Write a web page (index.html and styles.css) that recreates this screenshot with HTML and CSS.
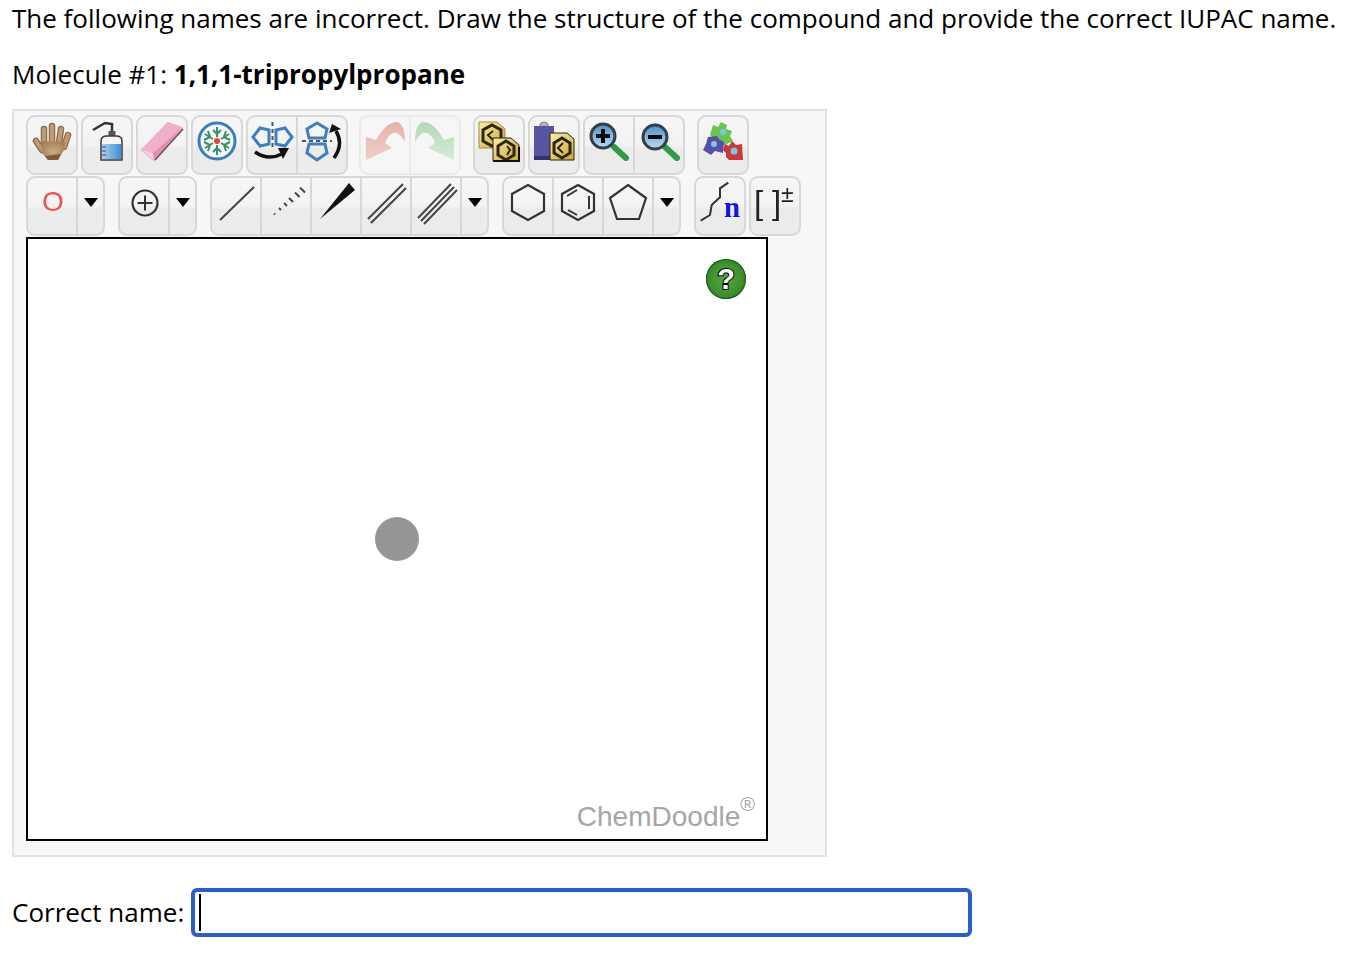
FILE: index.html
```html
<!DOCTYPE html>
<html>
<head>
    <meta name="viewport" content="width=device-width, initial-scale=1.0">
    <title>Molecule naming</title>
    <link rel="stylesheet" href="styles.css">
</head>
<body>
    <p class="intro">The following names are incorrect. Draw the structure of the compound and provide the correct IUPAC name.</p>
    <p class="molecule">Molecule #1: <b>1,1,1-tripropylpropane</b></p>

    <svg class="defs" width="0" height="0">
        <defs>
            <linearGradient id="gold" x1="0" y1="0" x2="1" y2="1">
                <stop offset="0" stop-color="#f8eeaa"/>
                <stop offset="1" stop-color="#c9a63a"/>
            </linearGradient>
            <linearGradient id="water" x1="0" y1="0" x2="1" y2="0">
                <stop offset="0" stop-color="#a9d3ef"/>
                <stop offset="1" stop-color="#3f8fd2"/>
            </linearGradient>
            <linearGradient id="lens" x1="0" y1="0" x2="0" y2="1">
                <stop offset="0" stop-color="#4f8fc4"/>
                <stop offset="1" stop-color="#bcdcf2"/>
            </linearGradient>
            <linearGradient id="pale-red" x1="0" y1="0" x2="0" y2="1">
                <stop offset="0" stop-color="#e4b3aa"/>
                <stop offset="1" stop-color="#efcfc8"/>
            </linearGradient>
            <linearGradient id="pale-green" x1="0" y1="0" x2="0" y2="1">
                <stop offset="0" stop-color="#b5d8b8"/>
                <stop offset="1" stop-color="#d6ead6"/>
            </linearGradient>
            <radialGradient id="skin" cx="0.5" cy="0.55" r="0.6">
                <stop offset="0" stop-color="#cfa884"/>
                <stop offset="1" stop-color="#a37c58"/>
            </radialGradient>
        </defs>
    </svg>

    <div class="sketcher">
        <div class="toolbar">
            <div class="group">
                <div class="btn"><svg class="icon" viewBox="0 0 48 56">
                    <g stroke="#8a6a4a" stroke-width="6.500" stroke-linecap="round" fill="none">
                        <path d="M8 24 L14 33"/><path d="M16 26 L16 12"/><path d="M24 26 L24 9"/><path d="M31 26 L33 12"/><path d="M36 30 L40 18"/>
                    </g>
                    <g stroke="#c09a76" stroke-width="4" stroke-linecap="round" fill="none">
                        <path d="M8 24 L14 33"/><path d="M16 26 L16 12"/><path d="M24 26 L24 9"/><path d="M31 26 L33 12"/><path d="M36 30 L40 18"/>
                    </g>
                    <path d="M13 24 L37 25 L36 33 L30 43 L20 43 L14 36 Z" fill="url(#skin)"/>
                    <path d="M20 43 L30 43 L33 37 L17 39 Z" fill="#7c5a3a"/>
                </svg></div>
            </div>
            <div class="group">
                <div class="btn"><svg class="icon" viewBox="0 0 48 56">
                    <path d="M10 13 L22 6 L29 7 L29 18" fill="none" stroke="#333" stroke-width="2.500"/>
                    <rect x="25.500" y="14" width="7" height="6" fill="#555"/>
                    <path d="M18 24 Q18 19 24 19 L33 19 Q39 19 39 24 L39 43 L18 43 Z" fill="#f4f4f0" stroke="#3a3a3a" stroke-width="1.500"/>
                    <path d="M19 27 L38 27 L38 42 L19 42 Z" fill="url(#water)"/>
                    <path d="M19 30 H23 M19 34 H23 M19 38 H23" stroke="#446" stroke-width="1"/>
                </svg></div>
            </div>
            <div class="group">
                <div class="btn"><svg class="icon" viewBox="0 0 48 56">
                    <path d="M4 33 L30 6 L44 11 L16 43 Z" fill="#f0b0cb" stroke="#f0b0cb" stroke-width="2" stroke-linejoin="round"/>
                    <path d="M4 33 L15 36 L16 43 Z" fill="#f8cfe0"/>
                    <path d="M15 36 L44 11 L16 43 Z" fill="#dd8fb0"/>
                    <path d="M17 43 L45 12" stroke="#6f4a58" stroke-width="1.500"/>
                </svg></div>
            </div>
            <div class="group">
                <div class="btn"><svg class="icon" viewBox="0 0 48 56">
                    <circle cx="24" cy="24" r="18" fill="#f4f8fa" stroke="#3a80b8" stroke-width="3"/>
                    <g stroke="#3f8f66" stroke-width="2" fill="none">
                        <path d="M24 10 V20 M20 13 L24 17 L28 13"/>
                        <path d="M24 38 V28 M20 35 L24 31 L28 35"/>
                        <path d="M12 17 L20 22 M11 23 L17 20 L15 14"/>
                        <path d="M36 17 L28 22 M37 23 L31 20 L33 14"/>
                        <path d="M12 31 L20 26 M11 25 L17 28 L15 34"/>
                        <path d="M36 31 L28 26 M37 25 L31 28 L33 34"/>
                    </g>
                    <circle cx="24" cy="24" r="3" fill="#e0443c"/>
                </svg></div>
            </div>
            <div class="group">
                <div class="btn"><svg class="icon" viewBox="0 0 48 56">
                    <path d="M24.500 5 V33" stroke="#555" stroke-width="2" stroke-dasharray="4 3"/>
                    <path d="M21 13 L12 11 L5 20 L12 29 L21 27 Z" fill="none" stroke="#3f7fc0" stroke-width="3"/>
                    <path d="M28 13 L37 11 L44 20 L37 29 L28 27 Z" fill="none" stroke="#3f7fc0" stroke-width="3"/>
                    <path d="M7 35 Q20 44 34 37" fill="none" stroke="#111" stroke-width="3.500"/>
                    <path d="M30 31 L41 31 L35 42 Z" fill="#111"/>
                </svg></div>
                <div class="btn"><svg class="icon" viewBox="0 0 48 56">
                    <path d="M4 24 H34" stroke="#555" stroke-width="2" stroke-dasharray="4 3"/>
                    <path d="M11 21 L9 12 L19 6 L29 12 L27 21 Z" fill="none" stroke="#3f7fc0" stroke-width="3"/>
                    <path d="M11 27 L9 36 L19 43 L29 36 L27 27 Z" fill="none" stroke="#3f7fc0" stroke-width="3"/>
                    <path d="M36 41 Q46 27 38 14" fill="none" stroke="#111" stroke-width="3.500"/>
                    <path d="M31 16 L34 7 L43 12 Z" fill="#111"/>
                </svg></div>
            </div>
            <div class="group off undo">
                <div class="btn"><svg class="icon" viewBox="0 0 48 56">
                    <path d="M5 43 L5 20 L15 23 Q25 5 36 5 Q44 7 44 25 Q38 14 32 16 Q27 18 24 26 L31 31 Z" fill="url(#pale-red)"/>
                </svg></div>
                <div class="btn"><svg class="icon" viewBox="0 0 48 56">
                    <path transform="translate(48,0) scale(-1,1)" d="M5 43 L5 20 L15 23 Q25 5 36 5 Q44 7 44 25 Q38 14 32 16 Q27 18 24 26 L31 31 Z" fill="url(#pale-green)"/>
                </svg></div>
            </div>
            <div class="group wide">
                <div class="btn"><svg class="icon" viewBox="0 0 48 56">
                    <path d="M4 5 H22 L30 12 V31 H4 Z" fill="url(#gold)" stroke="#a88c3a" stroke-width="1"/>
                    <path d="M17 8 L26 13 V24 L17 29 L8 24 V13 Z" fill="none" stroke="#2e2810" stroke-width="3"/>
                    <path d="M18 14 L13 18 L18 23" fill="none" stroke="#2e2810" stroke-width="2"/>
                    <path d="M18 21 H36 L44 28 V44 H18 Z" fill="url(#gold)" stroke="#2c2408" stroke-width="1"/>
                    <path d="M31 24 L39 29 V38 L31 43 L23 38 V29 Z" fill="none" stroke="#2e2810" stroke-width="3"/>
                    <path d="M32 29 L35 33 L32 38" fill="none" stroke="#2e2810" stroke-width="2"/>
                    <path d="M18 44 H44 V30" fill="none" stroke="#111" stroke-width="2"/>
                </svg></div>
            </div>
            <div class="group">
                <div class="btn"><svg class="icon" viewBox="0 0 48 56">
                    <rect x="4" y="9" width="20" height="34" fill="#58549f"/>
                    <rect x="4" y="39" width="20" height="4" fill="#33306b"/>
                    <path d="M10 9 V7 Q14 3 18 7 V9" fill="#b0b0b4" stroke="#85858a"/>
                    <path d="M20 16 H37 L44 22 V43 H20 Z" fill="url(#gold)" stroke="#2c2408" stroke-width="1"/>
                    <path d="M32 21 L40 26 V36 L32 41 L24 36 V26 Z" fill="none" stroke="#2e2810" stroke-width="3"/>
                    <path d="M33 26 L28 31 L33 36" fill="none" stroke="#2e2810" stroke-width="2"/>
                </svg></div>
            </div>
            <div class="group">
                <div class="btn"><svg class="icon" viewBox="0 0 48 56">
                    <path d="M29 30 L41 41" stroke="#2f9a48" stroke-width="6" stroke-linecap="round"/>
                    <circle cx="18" cy="19" r="12" fill="url(#lens)" stroke="#33404c" stroke-width="3"/>
                    <path d="M11 19 H25 M18 12 V26" stroke="#0a0a0a" stroke-width="4"/>
                </svg></div>
                <div class="btn"><svg class="icon" viewBox="0 0 48 56">
                    <path d="M30 30 L42 41" stroke="#2f9a48" stroke-width="6" stroke-linecap="round"/>
                    <circle cx="20" cy="20" r="12" fill="url(#lens)" stroke="#33404c" stroke-width="3"/>
                    <path d="M13 20 H27" stroke="#0a0a0a" stroke-width="4"/>
                </svg></div>
            </div>
            <div class="group wide">
                <div class="btn"><svg class="icon" viewBox="0 0 48 56">
                    <path d="M14 8 L19 10 L22 5 L28 8 L27 12 L33 14 L31 19 L34 24 L24 29 L19 26 L11 18 Z" fill="#6cc44e"/>
                    <path d="M9 20 L18 19 L20 22 L25 25 L24 36 L16 34 L12 38 L4 33 L7 27 Z" fill="#5650a6"/>
                    <path d="M26 27 L30 29 L33 24 L37 28 L43 27 L44 43 L30 43 L27 40 L27 36 L24 33 Z" fill="#c63a3a"/>
                    <circle cx="24" cy="15" r="3" fill="#7cc6e8"/>
                    <circle cx="15" cy="27" r="3" fill="#7cc6e8"/>
                    <circle cx="35" cy="34" r="3.500" fill="#7cc6e8"/>
                </svg></div>
            </div>
        </div>

        <div class="toolbar">
            <div class="group">
                <div class="btn"><svg class="icon" viewBox="0 0 48 56">
                    <text x="25" y="33" class="atom">O</text>
                </svg></div>
                <div class="arrow"></div>
            </div>
            <div class="group tool-set">
                <div class="btn"><svg class="icon" viewBox="0 0 48 56">
                    <circle cx="25" cy="25" r="12.500" fill="none" stroke="#333" stroke-width="2.200"/>
                    <path d="M17.500 25 H32.500 M25 17.500 V32.500" stroke="#333" stroke-width="2"/>
                </svg></div>
                <div class="arrow"></div>
            </div>
            <div class="group tool-set">
                <div class="btn"><svg class="icon" viewBox="0 0 48 56">
                    <path d="M8 42 L42 9" stroke="#444" stroke-width="2"/>
                </svg></div>
                <div class="btn"><svg class="icon" viewBox="0 0 48 56">
                    <path d="M12 35.500 L13 36.500 M17 30 L19 32 M22 25 L25 28 M27 20 L31 24 M33 14.500 L37.500 19 M38 9.500 L43 14.500" stroke="#444" stroke-width="2"/>
                </svg></div>
                <div class="btn"><svg class="icon" viewBox="0 0 48 56">
                    <path d="M8 41 L37 5 L43 12 Z" fill="#111"/>
                </svg></div>
                <div class="btn"><svg class="icon" viewBox="0 0 48 56">
                    <path d="M6 41 L41 6 M9 45 L44 10" stroke="#444" stroke-width="2"/>
                </svg></div>
                <div class="btn"><svg class="icon" viewBox="0 0 48 56">
                    <path d="M6 40 L39 6 M9 43 L42 9 M12 46 L45 12" stroke="#444" stroke-width="2"/>
                </svg></div>
                <div class="arrow"></div>
            </div>
            <div class="group tool-set">
                <div class="btn"><svg class="icon" viewBox="0 0 48 56">
                    <path d="M24 7 L40 16 L40 33 L24 42 L8 33 L8 16 Z" fill="none" stroke="#333" stroke-width="2.200"/>
                </svg></div>
                <div class="btn"><svg class="icon" viewBox="0 0 48 56">
                    <path d="M24 7 L40 16 L40 33 L24 42 L8 33 L8 16 Z" fill="none" stroke="#333" stroke-width="2.200"/>
                    <path d="M13 18 L23 12 M35 18 V31 M14 32 L23 37" stroke="#333" stroke-width="2"/>
                </svg></div>
                <div class="btn"><svg class="icon" viewBox="0 0 48 56">
                    <path d="M24 7 L42 20 L35 41 L13 41 L6 20 Z" fill="none" stroke="#333" stroke-width="2.200"/>
                </svg></div>
                <div class="arrow"></div>
            </div>
            <div class="group tool-set">
                <div class="btn"><svg class="icon" viewBox="0 0 48 56">
                    <path d="M4.700 42.700 L14 37 L15.700 27 L24 19.300 L24 10.300 L32.300 4.700" fill="none" stroke="#333" stroke-width="2"/>
                    <text x="28" y="39" class="repeat">n</text>
                </svg></div>
            </div>
            <div class="group">
                <div class="btn"><svg class="icon" viewBox="0 0 48 56">
                    <text x="3" y="36" class="bracket">[</text>
                    <text x="21" y="36" class="bracket">]</text>
                    <text x="30" y="24" class="charge">±</text>
                </svg></div>
            </div>
        </div>

        <div class="canvas">
            <div class="help">?</div>
            <div class="loader"></div>
            <div class="brand">ChemDoodle<sup>®</sup></div>
        </div>
    </div>

    <div class="answer">
        <label class="answer-label">Correct name:</label>
        <div class="field"><span class="caret"></span></div>
    </div>
</body>
</html>
```

FILE: styles.css
```css
body {
    margin: 0;
    padding: 0 0 0 12px;
    font-family: "Open Sans", sans-serif;
    font-size: 26px;
    color: #000;
    background: #fff;
}
.intro {
    margin: 0;
    line-height: 36px;
    white-space: nowrap;
}
.molecule {
    margin: 20px 0 0;
    line-height: 36px;
}
.defs {
    position: absolute;
}
.sketcher {
    width: 815px;
    height: 748px;
    margin-top: 17px;
    padding: 4px 0 0 12px;
    border: 2px solid #e2e2e2;
    background: #f7f7f7;
    box-sizing: border-box;
}
.toolbar {
    display: flex;
    gap: 3px;
    height: 61px;
}
.group {
    display: flex;
    height: 60px;
    border: 2px solid #d8d8d8;
    border-radius: 9px;
    overflow: hidden;
    box-sizing: border-box;
    background: linear-gradient(#f6f6f6 0, #f3f3f3 50%, #ebebeb 56%, #ececec 100%);
}
.group.off {
    border-color: #eaeaea;
    background: #f6f6f6;
}
.group.undo {
    margin-left: 8px;
}
.group.wide {
    margin-left: 9px;
}
.group.tool-set {
    margin-left: 10px;
}
.btn {
    width: 48px;
    flex: none;
}
.btn + .btn,
.arrow {
    border-left: 2px solid #d8d8d8;
}
.group.off .btn + .btn {
    border-left-color: #eaeaea;
}
.icon {
    display: block;
    width: 48px;
    height: 56px;
    filter: blur(0.5px);
}
.arrow {
    position: relative;
    width: 25px;
    flex: none;
}
.arrow::after {
    content: "";
    position: absolute;
    left: 6px;
    top: 20px;
    border-left: 7px solid transparent;
    border-right: 7px solid transparent;
    border-top: 9px solid #000;
}
.atom {
    font-family: "Liberation Sans", sans-serif;
    font-size: 28px;
    fill: #f0524a;
    text-anchor: middle;
}
.repeat {
    font-family: "Liberation Serif", serif;
    font-weight: bold;
    font-size: 29px;
    fill: #1414e6;
}
.bracket {
    font-family: "Liberation Sans", sans-serif;
    font-size: 33px;
    fill: #222;
}
.charge {
    font-family: "Liberation Sans", sans-serif;
    font-size: 23px;
    fill: #222;
}
.canvas {
    position: relative;
    display: flex;
    align-items: center;
    justify-content: center;
    width: 742px;
    height: 604px;
    border: 2px solid #000;
    background: #fff;
    box-sizing: border-box;
}
.loader {
    width: 44px;
    height: 44px;
    border-radius: 50%;
    background: #969696;
}
.help {
    position: absolute;
    left: 678px;
    top: 20px;
    width: 40px;
    height: 40px;
    border-radius: 50%;
    background: radial-gradient(circle, #57a83f 0, #3f9030 55%, #1f6a1c 100%);
    box-shadow: inset 0 0 0 1px #1c5a1a;
    font-family: "Liberation Sans", sans-serif;
    font-weight: bold;
    font-size: 29px;
    line-height: 40px;
    text-align: center;
    color: #fff;
    -webkit-text-stroke: 2px #000;
    paint-order: stroke fill;
}
.brand {
    position: absolute;
    right: 11px;
    bottom: 4px;
    font-family: "Liberation Sans", sans-serif;
    font-size: 28px;
    line-height: 36px;
    color: #a6a6a6;
}
.brand sup {
    font-size: 20px;
    line-height: 0;
    vertical-align: 15px;
}
.answer {
    display: flex;
    align-items: center;
    gap: 7px;
    margin-top: 31px;
}
.answer-label {
    margin-bottom: 2px;
}
.field {
    display: flex;
    align-items: center;
    width: 781px;
    height: 49px;
    padding-left: 5px;
    border: 4px solid #2b5fc7;
    border-radius: 6px;
    box-sizing: border-box;
}
.caret {
    width: 2px;
    height: 37px;
    margin-left: -1px;
    background: #000;
}
```
